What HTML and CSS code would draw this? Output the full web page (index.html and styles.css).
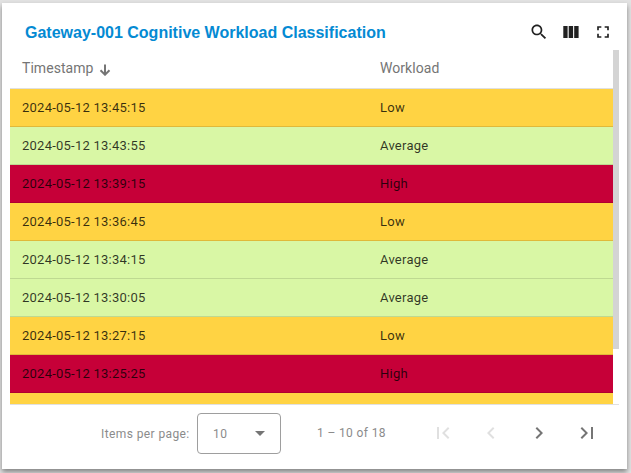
FILE: index.html
```html
<!DOCTYPE html>
<html lang="en">
<head>
<meta charset="utf-8">
<title>Cognitive Workload Classification</title>
<link rel="stylesheet" href="styles.css">
</head>
<body>
<main class="card">
  <header class="toolbar">
    <h1 class="title">Gateway-001 Cognitive Workload Classification</h1>
    <div class="actions">
      <svg class="icon" viewBox="0 0 24 24"><path d="M15.5 14h-.79l-.28-.27C15.41 12.59 16 11.11 16 9.5 16 5.91 13.09 3 9.5 3S3 5.91 3 9.5 5.91 16 9.5 16c1.61 0 3.09-.59 4.23-1.57l.27.28v.79l5 4.99L20.49 19l-4.99-5zm-6 0C7.01 14 5 11.99 5 9.5S7.01 5 9.5 5 14 7.01 14 9.5 11.99 14 9.5 14z"/></svg>
      <svg class="icon" viewBox="0 0 20 20"><path d="M2.3 4h4.3v12H2.3zM7.7 4h4.4v12H7.7zM13.2 4h4.4v12h-4.4z"/></svg>
      <svg class="icon" viewBox="0 0 24 24"><path d="M7 14H5v5h5v-2H7v-3zm-2-4h2V7h3V5H5v5zm12 7h-3v2h5v-5h-2v3zM14 5v2h3v3h2V5h-5z"/></svg>
    </div>
  </header>
  <section class="viewport">
    <div class="table">
      <div class="row head"><span>Timestamp<svg class="sort" viewBox="0 0 12 12"><path d="M6 .5v10M1.5 6.2 6 10.7l4.500-4.500"/></svg></span><span>Workload</span></div>
      <div class="row low"><span>2024-05-12 13:45:15</span><span>Low</span></div>
      <div class="row average"><span>2024-05-12 13:43:55</span><span>Average</span></div>
      <div class="row high"><span>2024-05-12 13:39:15</span><span>High</span></div>
      <div class="row low"><span>2024-05-12 13:36:45</span><span>Low</span></div>
      <div class="row average"><span>2024-05-12 13:34:15</span><span>Average</span></div>
      <div class="row average"><span>2024-05-12 13:30:05</span><span>Average</span></div>
      <div class="row low"><span>2024-05-12 13:27:15</span><span>Low</span></div>
      <div class="row high"><span>2024-05-12 13:25:25</span><span>High</span></div>
      <div class="row low"></div>
    </div>
    <div class="scrollbar"></div>
  </section>
  <footer class="paginator">
    <span class="label">Items per page:</span>
    <div class="select"><span>10</span><i class="caret"></i></div>
    <span class="range">1 – 10 of 18</span>
    <nav class="pages">
      <svg class="disabled" viewBox="0 0 24 24"><path d="M18.410 16.590L13.820 12l4.590-4.590L17 6l-6 6 6 6zM6 6h2v12H6z"/></svg>
      <svg class="disabled" viewBox="0 0 24 24"><path d="M15.410 7.410L14 6l-6 6 6 6 1.410-1.410L10.830 12z"/></svg>
      <svg viewBox="0 0 24 24"><path d="M10 6L8.590 7.410 13.170 12l-4.580 4.590L10 18l6-6z"/></svg>
      <svg viewBox="0 0 24 24"><path d="M5.590 7.410L10.180 12l-4.590 4.590L7 18l6-6-6-6zM16 6h2v12h-2z"/></svg>
    </nav>
  </footer>
</main>
</body>
</html>
```
FILE: styles.css
```css
* {
  box-sizing: border-box;
}

body {
  margin: 0;
  height: 473px;
  padding: 3px 4px 4px 2px;
  overflow: hidden;
  background: #e2e2e2;
  font-family: Roboto, "Liberation Sans", sans-serif;
}

.card {
  height: 466px;
  padding: 0 8px;
  background: #fff;
  box-shadow: 0 3px 5px rgba(0, 0, 0, 0.42);
}

.toolbar {
  display: flex;
  align-items: center;
  justify-content: space-between;
  height: 47px;
  padding: 11px 6px 0 15px;
}

.title {
  margin: 0;
  padding-top: 2px;
  color: #048ad3;
  font: bold 16px/24px "Liberation Sans", Arial, sans-serif;
}

.actions {
  display: flex;
  gap: 12px;
}

.icon {
  width: 20px;
  height: 20px;
  fill: #212121;
}

.viewport {
  display: flex;
  height: 355px;
  overflow: hidden;
  border-bottom: 1px solid #e0e0e0;
}

.table {
  flex: 1;
}

.row {
  display: grid;
  grid-template-columns: 358px 1fr;
  align-items: center;
  height: 38px;
  padding-left: 12px;
  border-bottom: 1px solid rgba(0, 0, 0, 0.12);
  color: rgba(0, 0, 0, 0.78);
  font-size: 13px;
  letter-spacing: 0.24px;
}

.head {
  height: 39px;
  padding-bottom: 2px;
  color: #757575;
  font-size: 14px;
  letter-spacing: 0.05px;
}

.sort {
  width: 12px;
  height: 12px;
  margin-left: 6px;
  vertical-align: -3px;
  fill: none;
  stroke: #757575;
  stroke-width: 2;
}

.low {
  background: #ffd343;
}

.average {
  background: #d9f7a5;
}

.high {
  background: #c60038;
}

.scrollbar {
  width: 6px;
  height: 299px;
  background: #d4d4d4;
}

.paginator {
  display: flex;
  align-items: center;
  height: 57px;
  padding-left: 91px;
  color: #8b8b8b;
  font-size: 12px;
  letter-spacing: 0.4px;
}

.label {
  width: 96px;
}

.select {
  display: flex;
  align-items: center;
  justify-content: space-between;
  width: 84px;
  height: 41px;
  padding: 0 15px;
  border: 1px solid #9e9e9e;
  border-radius: 4px;
}

.caret {
  border: 5px solid transparent;
  border-top-color: #757575;
  border-bottom: 0;
}

.range {
  width: 114px;
  margin-left: 36px;
  padding-bottom: 2px;
  letter-spacing: 0.36px;
}

.pages {
  display: flex;
  gap: 24px;
  padding-bottom: 2px;
}

.pages svg {
  width: 24px;
  height: 24px;
  fill: #757575;
}

.pages .disabled {
  fill: #e0e0e0;
}
```
